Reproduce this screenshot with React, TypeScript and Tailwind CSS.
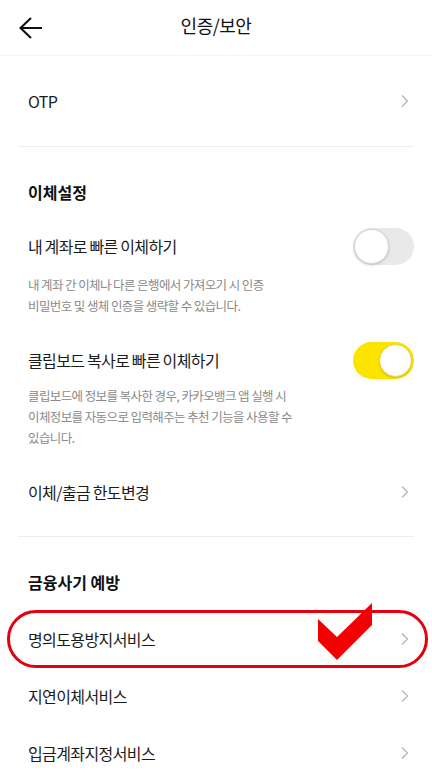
import React from "react";

const Chevron = () => (
  <svg width="8" height="14" viewBox="0 0 8 14" fill="none" className="shrink-0">
    <path d="M1 1.5 L6.5 7 L1 12.5" stroke="#b3b3b3" strokeWidth="1.2" />
  </svg>
);

const Toggle = ({ on }: { on: boolean }) =>
  on ? (
    <div className="w-[61px] h-[37px] rounded-full bg-[#fde400] flex items-center justify-end pr-[2px] shrink-0">
      <div className="w-[33px] h-[33px] rounded-full bg-white border border-[#e7d24a] shadow-[0_1px_2px_rgba(0,0,0,0.15)]" />
    </div>
  ) : (
    <div className="w-[61px] h-[37px] rounded-full bg-[#e9e9e9] flex items-center justify-start pl-[1px] shrink-0">
      <div className="w-[35px] h-[35px] rounded-full bg-white border border-[#d6d6d6] shadow-[0_1px_3px_rgba(0,0,0,0.18)]" />
    </div>
  );

const rowText = "text-[16px] tracking-[-0.6px] [word-spacing:-0.5px] text-[#1b1b1b]";
const descText = "text-[12.5px] tracking-[-0.6px] leading-[21px] text-[#8a8a8a]";
const headText = "text-[16px] font-bold text-[#111] leading-[28px]";

export default function App() {
  return (
    <div
      className="w-[432px] h-[780px] bg-white overflow-hidden"
      style={{ fontFamily: '"Noto Sans CJK KR", "Noto Sans", sans-serif' }}
    >
      {/* Header */}
      <div className="h-[56px] border-b border-[#f3f3f3] flex items-center relative">
        <div className="pl-[19px] w-[70px] flex items-center">
          <svg width="24" height="24" viewBox="0 0 24 24" fill="none">
            <path d="M1.5 12 H23 M12 2 L1.5 12 L12 22" stroke="#111" strokeWidth="2.1" strokeLinejoin="miter" />
          </svg>
        </div>
        <div className="flex-1 text-center text-[18px] tracking-[-0.5px] text-[#111] pb-[4px]">인증/보안</div>
        <div className="w-[70px]" />
      </div>

      <div className="mx-[18px]">
        {/* OTP */}
        <div className="h-[91px] border-b border-[#eeeeee] flex items-center justify-between pl-[10px] pr-[5px]">
          <span className={rowText}>OTP</span>
          <Chevron />
        </div>

        {/* 이체설정 */}
        <div className={`h-[74px] pt-[31px] pl-[10px] ${headText}`}>이체설정</div>

        <div className="h-[50px] flex items-center justify-between pl-[10px]">
          <span className={rowText}>내 계좌로 빠른 이체하기</span>
          <Toggle on={false} />
        </div>
        <div className={`mt-[3px] pl-[10px] ${descText}`}>
          내 계좌 간 이체나 다른 은행에서 가져오기 시 인증
          <br />
          비밀번호 및 생체 인증을 생략할 수 있습니다.
        </div>

        <div className="mt-[19px] h-[50px] flex items-center justify-between pl-[10px]">
          <span className={rowText}>클립보드 복사로 빠른 이체하기</span>
          <Toggle on={true} />
        </div>
        <div className={`pl-[10px] ${descText}`}>
          클립보드에 정보를 복사한 경우, 카카오뱅크 앱 실행 시
          <br />
          이체정보를 자동으로 입력해주는 추천 기능을 사용할 수
          <br />
          있습니다.
        </div>

        <div className="h-[89px] border-b border-[#eeeeee] flex items-center justify-between pl-[10px] pr-[5px]">
          <span className={rowText}>이체/출금 한도변경</span>
          <Chevron />
        </div>

        {/* 금융사기 예방 */}
        <div className={`h-[73px] pt-[31px] pl-[10px] ${headText}`}>금융사기 예방</div>

        <div className="relative h-[57px] flex items-center justify-between pl-[10px] pr-[5px]">
          <span className={rowText}>명의도용방지서비스</span>
          <Chevron />
          <div className="absolute -left-[11px] -right-[14px] top-0 -bottom-[1px] border-[3px] border-[#e3000f] rounded-full pointer-events-none" />
          <svg
            className="absolute left-[300px] -top-[7px]"
            width="54"
            height="57"
            viewBox="0 0 54 57"
          >
            <polygon points="54,0 54,22 19,57 0,38 0,16 19,34" fill="#f50000" />
          </svg>
        </div>
        <div className="h-[57px] flex items-center justify-between pl-[10px] pr-[5px]">
          <span className={rowText}>지연이체서비스</span>
          <Chevron />
        </div>
        <div className="h-[57px] flex items-center justify-between pl-[10px] pr-[5px]">
          <span className={rowText}>입금계좌지정서비스</span>
          <Chevron />
        </div>
      </div>
    </div>
  );
}
